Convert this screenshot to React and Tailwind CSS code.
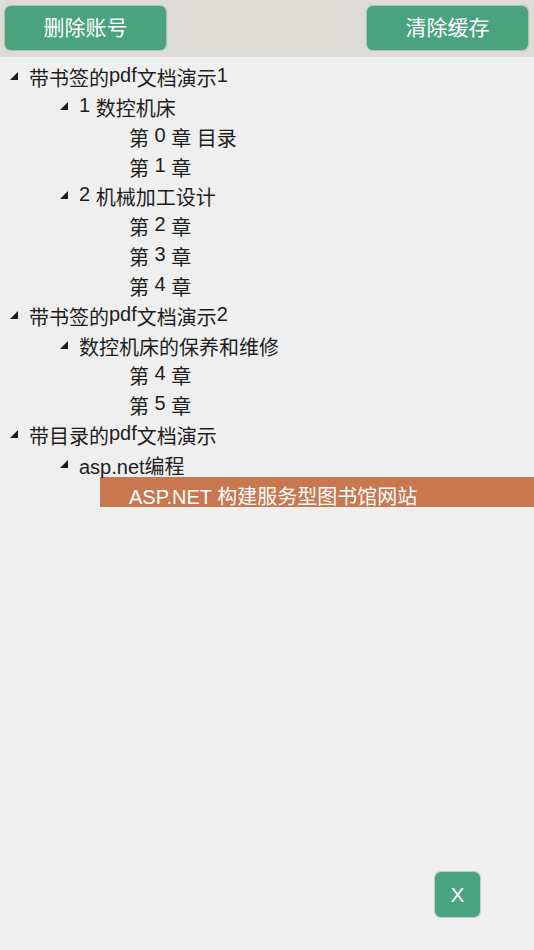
import React from "react";

const FONT = { fontFamily: '"Liberation Sans", "Noto Sans CJK SC", sans-serif' };

// Segments: plain strings render on the baseline, { up } segments sit a little higher
const tree = [
  { level: 0, open: true, parts: ["带书签的", { up: "pdf" }, "文档演示", { up: "1" }] },
  { level: 1, open: true, parts: [{ up: "1" }, " 数控机床"] },
  { level: 2, parts: ["第 ", { up: "0" }, " 章 目录"] },
  { level: 2, parts: ["第 ", { up: "1" }, " 章"] },
  { level: 1, open: true, parts: [{ up: "2" }, " 机械加工设计"] },
  { level: 2, parts: ["第 ", { up: "2" }, " 章"] },
  { level: 2, parts: ["第 ", { up: "3" }, " 章"] },
  { level: 2, parts: ["第 ", { up: "4" }, " 章"] },
  { level: 0, open: true, parts: ["带书签的", { up: "pdf" }, "文档演示", { up: "2" }] },
  { level: 1, open: true, parts: ["数控机床的保养和维修"] },
  { level: 2, parts: ["第 ", { up: "4" }, " 章"] },
  { level: 2, parts: ["第 ", { up: "5" }, " 章"] },
  { level: 0, open: true, parts: ["带目录的", { up: "pdf" }, "文档演示"] },
  { level: 1, open: true, parts: ["asp.net编程"] },
  { level: 2, active: true, parts: ["ASP.NET 构建服务型图书馆网站"] },
];

const indent = ["ml-0", "ml-[50px]", "ml-[100px]"];

function Expander({ open }) {
  return (
    <div className="w-[29px] shrink-0 pl-[10px] pt-[4px]">
      {open && (
        <svg width="8" height="8" viewBox="0 0 8 8" className="block">
          <polygon points="8,0 8,8 0,8" fill="#1c1c1c" />
        </svg>
      )}
    </div>
  );
}

function Row({ node }) {
  return (
    <div
      className={`${indent[node.level]} flex items-start h-[29.85px] pt-[9px] leading-[22px] text-[20px] whitespace-nowrap ${
        node.active ? "bg-[#c8774f] text-white" : "text-[#1e1e1e]"
      }`}
    >
      <Expander open={node.open} />
      <div>
        {node.parts.map((p, i) =>
          typeof p === "string" ? (
            <span key={i}>{p}</span>
          ) : (
            <span key={i} className="relative -top-[4px]">
              {p.up}
            </span>
          )
        )}
      </div>
    </div>
  );
}

function HeaderButton({ children }) {
  return (
    <button className="w-[161px] h-[44px] rounded-[6px] bg-[#48a37e] text-white text-[21px] shadow-[0_0_1px_1px_rgba(60,90,75,0.25)]">
      {children}
    </button>
  );
}

export default function App() {
  return (
    <div style={FONT} className="relative w-[534px] h-[950px] bg-[#efefef] overflow-hidden">
      <div className="h-[57px] bg-[#dddcd7] flex justify-between items-start pt-[6px] pl-[5px] pr-[6px]">
        <HeaderButton>删除账号</HeaderButton>
        <HeaderButton>清除缓存</HeaderButton>
      </div>
      <div className="pt-[2px]">
        {tree.map((n, i) => (
          <Row key={i} node={n} />
        ))}
      </div>
      <button className="absolute left-[435px] top-[872px] w-[45px] h-[45px] rounded-[6px] bg-[#48a37e] text-white text-[21px] shadow-[0_0_1px_1px_rgba(60,90,75,0.25)]">
        X
      </button>
    </div>
  );
}
